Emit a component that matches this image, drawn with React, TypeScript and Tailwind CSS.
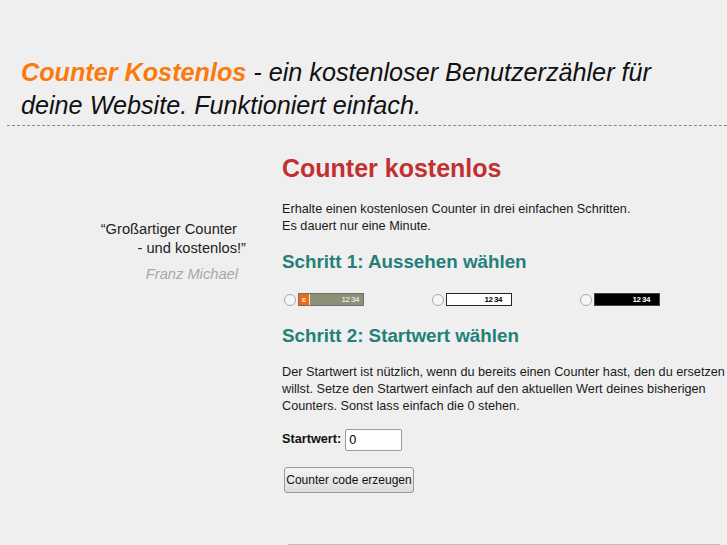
import React from "react";

function CounterPreview({ variant }: { variant: "orange" | "white" | "black" }) {
  if (variant === "orange") {
    return (
      <div className="flex h-[13px] w-[66px] border border-[#6f6f6f] bg-[#8b9077]">
        <div className="flex w-[10px] items-center justify-center bg-[#f06a12] text-[7px] font-bold leading-none text-white">c</div>
        <div className="w-[1px] bg-[#e9e9e9]" />
        <div className="flex flex-1 items-center justify-end pr-[4px] text-[8px] leading-none tracking-[-0.5px] text-white">12 34</div>
      </div>
    );
  }
  const cls = variant === "white" ? "bg-white text-black border-[#222]" : "bg-black text-white border-[#444]";
  return (
    <div className={`flex h-[13px] w-[66px] items-center justify-end border pr-[9px] text-[8px] font-bold leading-none tracking-[-0.5px] ${cls}`}>
      12 34
    </div>
  );
}

function Radio() {
  return <span className="inline-block h-[12px] w-[12px] rounded-full border border-[#a8a8a8] bg-[#f6f6f6]" />;
}

export default function App() {
  return (
    <div className="min-h-[545px] bg-[#efefef] font-['Liberation_Sans',Arial,sans-serif] text-[#222]">
      <div className="pl-[21px] pt-[56px] pb-[3px] text-[25.2px] leading-[33px] italic text-[#111]">
        <span className="font-bold text-[#fb7a0c]">Counter Kostenlos</span> - ein kostenloser Benutzerzähler für
        <br />
        deine Website. Funktioniert einfach.
      </div>
      <div className="ml-[7px] border-t border-dashed border-[#8a8a8a]" />

      <div className="flex">
        <div className="w-[282px] shrink-0 pt-[94px] pr-[36px] text-right text-[14.7px] leading-[19px] text-[#222]">
          <div className="pr-[9px]">“Großartiger Counter</div>
          <div>- und kostenlos!”</div>
          <div className="mt-[7px] pr-[8px] italic text-[#a8a8a8]">Franz Michael</div>
        </div>

        <div className="flex-1 pt-[27px]">
          <h1 className="text-[25px] font-bold leading-[30px] text-[#c23030]">Counter kostenlos</h1>
          <p className="mt-[18px] text-[12.7px] leading-[17px] text-[#1a1a1a]">
            Erhalte einen kostenlosen Counter in drei einfachen Schritten.
            <br />
            Es dauert nur eine Minute.
          </p>
          <h2 className="mt-[16px] text-[18.8px] font-bold leading-[22px] text-[#238079]">Schritt 1: Aussehen wählen</h2>
          <div className="mt-[20px] flex items-center pl-[2px]">
            <div className="flex w-[148px] items-center gap-[2px]">
              <Radio />
              <CounterPreview variant="orange" />
            </div>
            <div className="flex w-[148px] items-center gap-[2px]">
              <Radio />
              <CounterPreview variant="white" />
            </div>
            <div className="flex items-center gap-[2px]">
              <Radio />
              <CounterPreview variant="black" />
            </div>
          </div>
          <h2 className="mt-[19px] text-[18.8px] font-bold leading-[22px] text-[#238079]">Schritt 2: Startwert wählen</h2>
          <p className="mt-[17px] text-[12.7px] leading-[17px] text-[#1a1a1a]">
            Der Startwert ist nützlich, wenn du bereits einen Counter hast, den du ersetzen
            <br />
            willst. Setze den Startwert einfach auf den aktuellen Wert deines bisherigen
            <br />
            Counters. Sonst lass einfach die 0 stehen.
          </p>
          <div className="mt-[14px] flex items-center gap-[4px] text-[12.7px]">
            <label className="font-bold text-[#111]">Startwert:</label>
            <input
              defaultValue="0"
              className="h-[22px] w-[57px] rounded-[2px] border border-[#9a9a9a] bg-white px-[3px] text-[12.7px] text-black outline-none"
            />
          </div>
          <button className="mt-[16px] ml-[2px] h-[26px] w-[130px] whitespace-nowrap rounded-[3px] border border-[#9a9a9a] bg-gradient-to-b from-[#f4f4f4] to-[#dcdcdc] px-0 text-[12px] text-[#111]">
            Counter code erzeugen
          </button>
          <div className="mt-[51px] ml-[6px] mr-[7px] border-t border-[#bdbdbd]" />
        </div>
      </div>
    </div>
  );
}
